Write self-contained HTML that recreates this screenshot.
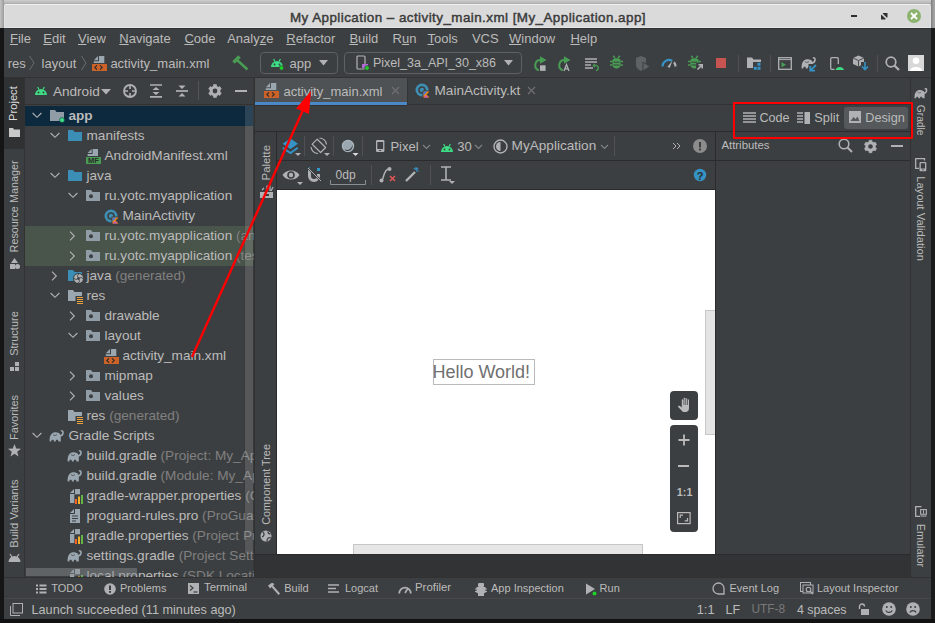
<!DOCTYPE html><html><head><meta charset="utf-8"><style>
html,body{margin:0;padding:0;width:935px;height:623px;overflow:hidden;background:#1c1c1c;position:relative;font-family:"Liberation Sans",sans-serif;}
.t{position:absolute;white-space:nowrap;font-family:"Liberation Sans",sans-serif;}
svg{overflow:visible}
</style></head><body>
<div style="position:absolute;left:0px;top:0px;width:935px;height:28px;background:linear-gradient(#cdcdcd,#c0c0c0 2px,#a9a9a9 4px,#a9a9a9);"></div>
<div style="position:absolute;left:0px;top:0px;width:4px;height:28px;background:linear-gradient(90deg,#c2c2c2,#b0b0b0 2px,#999999 4px);"></div>
<div style="position:absolute;left:931px;top:0px;width:4px;height:28px;background:linear-gradient(90deg,#7a7a7a,#9c9c9c 2px,#a4a4a4 4px);"></div>
<div style="position:absolute;left:0px;top:28px;width:4px;height:595px;background:#151515;"></div>
<div style="position:absolute;left:931px;top:28px;width:4px;height:595px;background:#1b1b1b;"></div>
<div style="position:absolute;left:0px;top:619px;width:935px;height:4px;background:#121212;"></div>
<div style="position:absolute;left:4px;top:28px;width:927px;height:591px;background:#3c3f41;"></div>
<div style="position:absolute;left:4px;top:4px;width:927px;height:24px;background:#dadada;border-top:1px solid #efefef;border-left:1px solid #e2e2e2;border-right:1px solid #e2e2e2;border-bottom:1px solid #e6e6e6;box-sizing:border-box;border-radius:2px 2px 0 0;"></div>
<div style="position:absolute;left:4px;top:28px;width:927px;height:1px;background:#2f3234;"></div>
<div class="t" style="left:290px;top:10.66px;font-size:13.4px;line-height:13.4px;color:#3a3a3a;-webkit-text-stroke:0.45px #3a3a3a;letter-spacing:0.45px;">My Application – activity_main.xml [My_Application.app]</div>
<div style="position:absolute;left:851px;top:15px;width:6px;height:2px;background:#2e2e2e;"></div>
<svg style="position:absolute;left:880.5px;top:12.5px;" width="7" height="7" viewBox="0 0 7 7"><path d="M2.3 0 H6.5 V4.2 L4.2 6.5 H0 V2.3 Z" fill="#2e2e2e"/><path d="M0.6 0.6 L5.9 5.9" stroke="#dadada" stroke-width="1.5"/></svg>
<svg style="position:absolute;left:907px;top:9px;" width="14" height="14" viewBox="0 0 14 14"><circle cx="7" cy="7" r="7" fill="#8cb36e"/><path d="M4 4 L10 10 M10 4 L4 10" stroke="#fff" stroke-width="1.8"/></svg>
<div class="t" style="left:10px;top:32.00px;font-size:13px;line-height:13px;color:#bbbbbb;"><u>F</u>ile</div>
<div class="t" style="left:43.3px;top:32.00px;font-size:13px;line-height:13px;color:#bbbbbb;"><u>E</u>dit</div>
<div class="t" style="left:78px;top:32.00px;font-size:13px;line-height:13px;color:#bbbbbb;"><u>V</u>iew</div>
<div class="t" style="left:119.3px;top:32.00px;font-size:13px;line-height:13px;color:#bbbbbb;"><u>N</u>avigate</div>
<div class="t" style="left:184.4px;top:32.00px;font-size:13px;line-height:13px;color:#bbbbbb;"><u>C</u>ode</div>
<div class="t" style="left:227.2px;top:32.00px;font-size:13px;line-height:13px;color:#bbbbbb;">Analy<u>z</u>e</div>
<div class="t" style="left:286.3px;top:32.00px;font-size:13px;line-height:13px;color:#bbbbbb;"><u>R</u>efactor</div>
<div class="t" style="left:349.4px;top:32.00px;font-size:13px;line-height:13px;color:#bbbbbb;"><u>B</u>uild</div>
<div class="t" style="left:392.5px;top:32.00px;font-size:13px;line-height:13px;color:#bbbbbb;">R<u>u</u>n</div>
<div class="t" style="left:427.5px;top:32.00px;font-size:13px;line-height:13px;color:#bbbbbb;"><u>T</u>ools</div>
<div class="t" style="left:471.9px;top:32.00px;font-size:13px;line-height:13px;color:#bbbbbb;">VCS</div>
<div class="t" style="left:509px;top:32.00px;font-size:13px;line-height:13px;color:#bbbbbb;"><u>W</u>indow</div>
<div class="t" style="left:570.4px;top:32.00px;font-size:13px;line-height:13px;color:#bbbbbb;"><u>H</u>elp</div>
<div style="position:absolute;left:4px;top:77px;width:927px;height:1px;background:#323232;"></div>
<div class="t" style="left:7.7px;top:57.00px;font-size:13px;line-height:13px;color:#bbbbbb;">res</div>
<svg style="position:absolute;left:28px;top:55px;" width="8" height="16" viewBox="0 0 8 16"><path d="M1.5 1 L6 8 L1.5 15" stroke="#6a6d70" stroke-width="1" fill="none"/></svg>
<div class="t" style="left:41.6px;top:57.00px;font-size:13px;line-height:13px;color:#bbbbbb;">layout</div>
<svg style="position:absolute;left:80px;top:55px;" width="8" height="16" viewBox="0 0 8 16"><path d="M1.5 1 L6 8 L1.5 15" stroke="#6a6d70" stroke-width="1" fill="none"/></svg>
<svg style="position:absolute;left:92px;top:56px;" width="15" height="15" viewBox="0 0 15 15"><path d="M1.8 4.2 L6 0 V4.2 Z" fill="#9aa7b0"/><path d="M7 0 H12.3 V7 H1.8 V5.2 H7 Z" fill="#9aa7b0"/><rect x="0" y="8" width="15" height="7" fill="#cc6228"/><path d="M5 9.3 L2.8 11.5 L5 13.7 M8 9.3 L10.2 11.5 L8 13.7" stroke="#2b2b2b" stroke-width="1.1" fill="none"/></svg>
<div class="t" style="left:110.4px;top:57.00px;font-size:13px;line-height:13px;color:#bbbbbb;">activity_main.xml</div>
<svg style="position:absolute;left:232px;top:55px;" width="17" height="16" viewBox="0 0 17 16"><path d="M1.5 7.5 L7.5 1.5" stroke="#499c54" stroke-width="3.6"/><path d="M5 5 L15.5 14.5" stroke="#499c54" stroke-width="2.4"/></svg>
<div style="position:absolute;left:260px;top:52px;width:78px;height:22px;background:transparent;border:1px solid #5e6161;border-radius:4px;box-sizing:border-box;"></div>
<svg style="position:absolute;left:270px;top:56px;" width="14" height="14" viewBox="0 0 14 14"><path d="M1 11 A6 6 0 0 1 13 11 Z" fill="#3ddc84"/><path d="M3.6 3 L5 5.5 M10.4 3 L9 5.5" stroke="#3ddc84" stroke-width="1.2"/><circle cx="4.5" cy="8.5" r="0.9" fill="#3c3f41"/><circle cx="9.5" cy="8.5" r="0.9" fill="#3c3f41"/><circle cx="11.5" cy="12" r="2.3" fill="#1bd126" stroke="#3c3f41" stroke-width="0.8"/></svg>
<div class="t" style="left:289.5px;top:57.00px;font-size:13px;line-height:13px;color:#bbbbbb;">app</div>
<svg style="position:absolute;left:319px;top:60px;" width="10" height="6" viewBox="0 0 10 6"><path d="M0 0 H9 L4.5 5.5 Z" fill="#afb1b3"/></svg>
<div style="position:absolute;left:344px;top:52px;width:178px;height:22px;background:transparent;border:1px solid #5e6161;border-radius:4px;box-sizing:border-box;"></div>
<svg style="position:absolute;left:356px;top:55px;" width="14" height="16" viewBox="0 0 14 16"><rect x="1" y="1" width="8" height="13" rx="1" stroke="#afb1b3" stroke-width="1.2" fill="none"/><rect x="6" y="9" width="6" height="4" fill="#b06ad4"/><circle cx="11" cy="13" r="2.3" fill="#1bd126" stroke="#3c3f41" stroke-width="0.8"/></svg>
<div class="t" style="left:373px;top:57.42px;font-size:12.5px;line-height:12.5px;color:#bbbbbb;">Pixel_3a_API_30_x86</div>
<svg style="position:absolute;left:504px;top:60px;" width="10" height="6" viewBox="0 0 10 6"><path d="M0 0 H9 L4.5 5.5 Z" fill="#afb1b3"/></svg>
<div style="position:absolute;left:4px;top:78px;width:20px;height:499px;background:#3c3f41;"></div>
<div style="position:absolute;left:24px;top:78px;width:1px;height:499px;background:#323232;"></div>
<div style="position:absolute;left:4px;top:78px;width:20px;height:71px;background:#2f3133;"></div>
<div class="t" style="left:-13.75px;top:98.38px;width:54.7px;height:11.15px;font-size:11.15px;line-height:11.15px;color:#dddddd;text-align:center;transform:rotate(-90deg);transform-origin:50% 50%;">Project</div>
<svg style="position:absolute;left:9px;top:128px;" width="11" height="9" viewBox="0 0 11 9"><path d="M0 0 H4 L5 1.5 H11 V9 H0 Z" fill="#c8c8c8"/></svg>
<div class="t" style="left:-41.60px;top:201.09px;width:112.0px;height:10.82px;font-size:10.82px;line-height:10.82px;color:#bbbbbb;text-align:center;transform:rotate(-90deg);transform-origin:50% 50%;">Resource Manager</div>
<svg style="position:absolute;left:9px;top:258px;" width="11" height="11" viewBox="0 0 11 11"><path d="M5.5 0 L9 5 H2 Z" fill="#afb1b3"/><rect x="1" y="6" width="5" height="5" fill="#afb1b3"/><circle cx="8.5" cy="8.5" r="2.5" fill="#afb1b3"/></svg>
<div class="t" style="left:-17.90px;top:328.30px;width:64.60000000000002px;height:10.99px;font-size:10.99px;line-height:10.99px;color:#bbbbbb;text-align:center;transform:rotate(-90deg);transform-origin:50% 50%;">Structure</div>
<svg style="position:absolute;left:10px;top:362px;" width="10" height="10" viewBox="0 0 10 10"><rect x="0" y="5" width="4" height="4" fill="#afb1b3"/><rect x="5" y="0" width="4" height="4" fill="#afb1b3"/><rect x="5" y="5" width="4" height="4" fill="#afb1b3"/></svg>
<div class="t" style="left:-18.10px;top:411.53px;width:65.0px;height:10.94px;font-size:10.94px;line-height:10.94px;color:#bbbbbb;text-align:center;transform:rotate(-90deg);transform-origin:50% 50%;">Favorites</div>
<svg style="position:absolute;left:8px;top:444px;" width="13" height="13" viewBox="0 0 13 13"><path d="M6.5 0 L8.2 4.6 L13 4.8 L9.2 7.8 L10.5 12.5 L6.5 9.8 L2.5 12.5 L3.8 7.8 L0 4.8 L4.8 4.6 Z" fill="#afb1b3"/></svg>
<div class="t" style="left:-29.80px;top:508.09px;width:88.39999999999998px;height:11.22px;font-size:11.22px;line-height:11.22px;color:#bbbbbb;text-align:center;transform:rotate(-90deg);transform-origin:50% 50%;">Build Variants</div>
<svg style="position:absolute;left:8px;top:553px;" width="13" height="10" viewBox="0 0 13 10"><path d="M0.5 9 A6 6 0 0 1 12.5 9 Z" fill="#afb1b3"/><path d="M2 1 L4 4 M11 1 L9 4" stroke="#afb1b3" stroke-width="1.3"/></svg>
<div style="position:absolute;left:25px;top:78px;width:228px;height:499px;background:#3c3f41;"></div>
<div style="position:absolute;left:25px;top:104px;width:228px;height:1px;background:#323232;"></div>
<svg style="position:absolute;left:35px;top:57px;" width="14" height="14" viewBox="0 0 14 14"></svg>
<svg style="position:absolute;left:34px;top:84px;" width="14" height="12" viewBox="0 0 14 12"><path d="M1 11 A6 6 0 0 1 13 11 Z" fill="#3ddc84"/><path d="M3.6 3 L5 5.5 M10.4 3 L9 5.5" stroke="#3ddc84" stroke-width="1.2"/><circle cx="4.5" cy="8.5" r="0.9" fill="#3c3f41"/><circle cx="9.5" cy="8.5" r="0.9" fill="#3c3f41"/></svg>
<div class="t" style="left:52.9px;top:85.49px;font-size:13.6px;line-height:13.6px;color:#bbbbbb;">Android</div>
<svg style="position:absolute;left:101px;top:89px;" width="11" height="6" viewBox="0 0 11 6"><path d="M0 0 H10 L5 5.5 Z" fill="#afb1b3"/></svg>
<svg style="position:absolute;left:123px;top:84px;" width="14" height="14" viewBox="0 0 14 14"><circle cx="7" cy="7" r="6" stroke="#afb1b3" stroke-width="1.8" fill="none"/><path d="M7 1 V5 M7 9 V13 M1 7 H5 M9 7 H13" stroke="#afb1b3" stroke-width="1.6"/></svg>
<svg style="position:absolute;left:150px;top:84px;" width="12" height="14" viewBox="0 0 12 14"><path d="M0 1 H12 M0 12.8 H12" stroke="#afb1b3" stroke-width="1.7"/><path d="M2.5 6 L6 3 L9.5 6 Z M2.5 8 L6 11 L9.5 8 Z" fill="#afb1b3"/></svg>
<svg style="position:absolute;left:176px;top:84px;" width="12" height="14" viewBox="0 0 12 14"><path d="M0 7 H12" stroke="#afb1b3" stroke-width="1.7"/><path d="M2.5 1.5 L6 5 L9.5 1.5 Z M2.5 12.5 L6 9 L9.5 12.5 Z" fill="#afb1b3"/></svg>
<div style="position:absolute;left:198px;top:81px;width:1px;height:19px;background:#555555;"></div>
<svg style="position:absolute;left:208.3px;top:84.3px;" width="14" height="14" viewBox="0 0 14 14"><path d="M4.57 2.52 L5.55 2.11 L5.49 0.57 L8.51 0.57 L8.45 2.11 L9.43 2.52 L9.66 2.65 L10.51 3.30 L11.81 2.48 L13.32 5.09 L11.96 5.81 L12.10 6.87 L12.10 7.13 L11.96 8.19 L13.32 8.91 L11.81 11.52 L10.51 10.70 L9.66 11.35 L9.43 11.48 L8.45 11.89 L8.51 13.43 L5.49 13.43 L5.55 11.89 L4.57 11.48 L4.34 11.35 L3.49 10.70 L2.19 11.52 L0.68 8.91 L2.04 8.19 L1.90 7.13 L1.90 6.87 L2.04 5.81 L0.68 5.09 L2.19 2.48 L3.49 3.30 L4.34 2.65 Z" fill="#afb1b3" stroke="#afb1b3" stroke-width="0.6" stroke-linejoin="round"/><circle cx="7" cy="7" r="2.4" fill="#3c3f41"/></svg>
<div style="position:absolute;left:235px;top:90px;width:12px;height:2px;background:#afb1b3;"></div>
<div style="position:absolute;left:25px;top:106px;width:228px;height:20px;background:#0d293e;"></div>
<div style="position:absolute;left:25px;top:226px;width:228px;height:40px;background:#49544a;"></div>
<svg style="position:absolute;left:31.5px;top:112.4px;" width="10" height="6" viewBox="0 0 10 6"><path d="M0.6 1 L5 5.3 L9.4 1" stroke="#afb1b3" stroke-width="1.15" fill="none"/></svg>
<svg style="position:absolute;left:50px;top:110.2px;" width="14" height="11" viewBox="0 0 14 11"><path d="M0 0 H5 L6.5 2 H14 V11 H0 Z" fill="#909da6"/><circle cx="12" cy="10" r="2.5" fill="#3ddc84" stroke="#0d293e" stroke-width="0.5"/></svg>
<div class="t" style="left:68.5px;top:109.49px;font-size:13.6px;line-height:13.6px;color:#bbbbbb;font-weight:bold;">app</div>
<svg style="position:absolute;left:49.5px;top:132.4px;" width="10" height="6" viewBox="0 0 10 6"><path d="M0.6 1 L5 5.3 L9.4 1" stroke="#afb1b3" stroke-width="1.15" fill="none"/></svg>
<svg style="position:absolute;left:68px;top:130.2px;" width="14" height="11" viewBox="0 0 14 11"><path d="M0 0 H5 L6.5 2 H14 V11 H0 Z" fill="#3b8eb5"/></svg>
<div class="t" style="left:86.5px;top:129.49px;font-size:13.6px;line-height:13.6px;color:#bbbbbb;">manifests</div>
<svg style="position:absolute;left:86px;top:149px;" width="15" height="15" viewBox="0 0 15 15"><path d="M1.6 4 L5.6 0 V4 Z" fill="#9aa7b0"/><path d="M6.6 0 H12 V7 H1.6 V5 H6.6 Z" fill="#9aa7b0"/><rect x="0" y="8" width="15" height="7" fill="#499c54"/><text x="7.5" y="14.3" font-size="7.5" font-weight="bold" font-family="Liberation Sans" text-anchor="middle" fill="#2b2b2b">MF</text></svg>
<div class="t" style="left:104.5px;top:149.49px;font-size:13.6px;line-height:13.6px;color:#bbbbbb;">AndroidManifest.xml</div>
<svg style="position:absolute;left:49.5px;top:172.4px;" width="10" height="6" viewBox="0 0 10 6"><path d="M0.6 1 L5 5.3 L9.4 1" stroke="#afb1b3" stroke-width="1.15" fill="none"/></svg>
<svg style="position:absolute;left:68px;top:170.2px;" width="14" height="11" viewBox="0 0 14 11"><path d="M0 0 H5 L6.5 2 H14 V11 H0 Z" fill="#3b8eb5"/></svg>
<div class="t" style="left:86.5px;top:169.49px;font-size:13.6px;line-height:13.6px;color:#bbbbbb;">java</div>
<svg style="position:absolute;left:67.5px;top:192.4px;" width="10" height="6" viewBox="0 0 10 6"><path d="M0.6 1 L5 5.3 L9.4 1" stroke="#afb1b3" stroke-width="1.15" fill="none"/></svg>
<svg style="position:absolute;left:86px;top:190.2px;" width="14" height="11" viewBox="0 0 14 11"><path d="M0 0 H5 L6.5 2 H14 V11 H0 Z" fill="#909da6"/><circle cx="5" cy="6.2" r="2" fill="#3c3f41"/></svg>
<div class="t" style="left:104.5px;top:189.49px;font-size:13.6px;line-height:13.6px;color:#bbbbbb;">ru.yotc.myapplication</div>
<svg style="position:absolute;left:104px;top:209px;" width="15" height="15" viewBox="0 0 15 15"><circle cx="7" cy="7" r="6.5" fill="#3d8fb3"/><circle cx="7" cy="7" r="3" fill="none" stroke="#3c3f41" stroke-width="1.6"/><path d="M7.5 7.5 H15 V15 H7.5 Z" fill="#3c3f41"/><path d="M8.5 8.5 H14.5 L11.5 11.5 L14.5 14.5 H8.5 Z" fill="#f88909"/><path d="M8.5 8.5 H12.5 L8.5 12.5 Z" fill="#3d7be0"/><path d="M8.5 14.5 L11 12 L13.5 14.5 Z" fill="#c757bc"/></svg>
<div class="t" style="left:122.5px;top:209.49px;font-size:13.6px;line-height:13.6px;color:#bbbbbb;">MainActivity</div>
<svg style="position:absolute;left:69.3px;top:230.6px;" width="6" height="10" viewBox="0 0 6 10"><path d="M1 0.6 L5.3 5 L1 9.4" stroke="#afb1b3" stroke-width="1.15" fill="none"/></svg>
<svg style="position:absolute;left:86px;top:230.2px;" width="14" height="11" viewBox="0 0 14 11"><path d="M0 0 H5 L6.5 2 H14 V11 H0 Z" fill="#909da6"/><circle cx="5" cy="6.2" r="2" fill="#3c3f41"/></svg>
<div class="t" style="left:104.5px;top:229.49px;font-size:13.6px;line-height:13.6px;color:#bbbbbb;">ru.yotc.myapplication <span style="color:#808080">(androidTest)</span></div>
<svg style="position:absolute;left:69.3px;top:250.6px;" width="6" height="10" viewBox="0 0 6 10"><path d="M1 0.6 L5.3 5 L1 9.4" stroke="#afb1b3" stroke-width="1.15" fill="none"/></svg>
<svg style="position:absolute;left:86px;top:250.2px;" width="14" height="11" viewBox="0 0 14 11"><path d="M0 0 H5 L6.5 2 H14 V11 H0 Z" fill="#909da6"/><circle cx="5" cy="6.2" r="2" fill="#3c3f41"/></svg>
<div class="t" style="left:104.5px;top:249.49px;font-size:13.6px;line-height:13.6px;color:#bbbbbb;">ru.yotc.myapplication <span style="color:#808080">(test)</span></div>
<svg style="position:absolute;left:51.3px;top:270.6px;" width="6" height="10" viewBox="0 0 6 10"><path d="M1 0.6 L5.3 5 L1 9.4" stroke="#afb1b3" stroke-width="1.15" fill="none"/></svg>
<svg style="position:absolute;left:68px;top:270px;" width="16" height="15" viewBox="0 0 16 15"><path d="M0 0 H5 L6.5 2 H14 V11 H0 Z" fill="#3b8eb5"/><circle cx="10.5" cy="8.5" r="5.5" fill="#3c3f41"/><circle cx="10.5" cy="8.5" r="4.6" fill="#afb1b3"/><path d="M10.5 8.5 C9 6 9.5 4.5 11 4 M10.5 8.5 C13 7 14.5 7.5 15 9 M10.5 8.5 C12 11 11.5 12.5 10 13 M10.5 8.5 C8 10 6.5 9.5 6 8" stroke="#3c3f41" stroke-width="0.9" fill="none"/><circle cx="10.5" cy="8.5" r="1.2" fill="#3c3f41"/></svg>
<div class="t" style="left:86.5px;top:269.49px;font-size:13.6px;line-height:13.6px;color:#bbbbbb;">java <span style="color:#808080">(generated)</span></div>
<svg style="position:absolute;left:49.5px;top:292.4px;" width="10" height="6" viewBox="0 0 10 6"><path d="M0.6 1 L5 5.3 L9.4 1" stroke="#afb1b3" stroke-width="1.15" fill="none"/></svg>
<svg style="position:absolute;left:68px;top:290px;" width="16" height="15" viewBox="0 0 16 15"><path d="M0 0 H5 L6.5 2 H14 V11 H0 Z" fill="#9aa7b0"/><rect x="7.5" y="6" width="8.5" height="9" fill="#3c3f41"/><path d="M9 7.5 H15 M9 9.5 H15 M9 11.5 H15 M9 13.5 H15" stroke="#e8a33e" stroke-width="1.1"/></svg>
<div class="t" style="left:86.5px;top:289.49px;font-size:13.6px;line-height:13.6px;color:#bbbbbb;">res</div>
<svg style="position:absolute;left:69.3px;top:310.6px;" width="6" height="10" viewBox="0 0 6 10"><path d="M1 0.6 L5.3 5 L1 9.4" stroke="#afb1b3" stroke-width="1.15" fill="none"/></svg>
<svg style="position:absolute;left:86px;top:310.2px;" width="14" height="11" viewBox="0 0 14 11"><path d="M0 0 H5 L6.5 2 H14 V11 H0 Z" fill="#909da6"/><circle cx="5" cy="6.2" r="2" fill="#3c3f41"/></svg>
<div class="t" style="left:104.5px;top:309.49px;font-size:13.6px;line-height:13.6px;color:#bbbbbb;">drawable</div>
<svg style="position:absolute;left:67.5px;top:332.4px;" width="10" height="6" viewBox="0 0 10 6"><path d="M0.6 1 L5 5.3 L9.4 1" stroke="#afb1b3" stroke-width="1.15" fill="none"/></svg>
<svg style="position:absolute;left:86px;top:330.2px;" width="14" height="11" viewBox="0 0 14 11"><path d="M0 0 H5 L6.5 2 H14 V11 H0 Z" fill="#909da6"/><circle cx="5" cy="6.2" r="2" fill="#3c3f41"/></svg>
<div class="t" style="left:104.5px;top:329.49px;font-size:13.6px;line-height:13.6px;color:#bbbbbb;">layout</div>
<svg style="position:absolute;left:104px;top:349px;" width="15" height="15" viewBox="0 0 15 15"><path d="M1.8 4.2 L6 0 V4.2 Z" fill="#9aa7b0"/><path d="M7 0 H12.3 V7 H1.8 V5.2 H7 Z" fill="#9aa7b0"/><rect x="0" y="8" width="15" height="7" fill="#cc6228"/><path d="M5 9.3 L2.8 11.5 L5 13.7 M8 9.3 L10.2 11.5 L8 13.7" stroke="#2b2b2b" stroke-width="1.1" fill="none"/></svg>
<div class="t" style="left:122.5px;top:349.49px;font-size:13.6px;line-height:13.6px;color:#bbbbbb;">activity_main.xml</div>
<svg style="position:absolute;left:69.3px;top:370.6px;" width="6" height="10" viewBox="0 0 6 10"><path d="M1 0.6 L5.3 5 L1 9.4" stroke="#afb1b3" stroke-width="1.15" fill="none"/></svg>
<svg style="position:absolute;left:86px;top:370.2px;" width="14" height="11" viewBox="0 0 14 11"><path d="M0 0 H5 L6.5 2 H14 V11 H0 Z" fill="#909da6"/><circle cx="5" cy="6.2" r="2" fill="#3c3f41"/></svg>
<div class="t" style="left:104.5px;top:369.49px;font-size:13.6px;line-height:13.6px;color:#bbbbbb;">mipmap</div>
<svg style="position:absolute;left:69.3px;top:390.6px;" width="6" height="10" viewBox="0 0 6 10"><path d="M1 0.6 L5.3 5 L1 9.4" stroke="#afb1b3" stroke-width="1.15" fill="none"/></svg>
<svg style="position:absolute;left:86px;top:390.2px;" width="14" height="11" viewBox="0 0 14 11"><path d="M0 0 H5 L6.5 2 H14 V11 H0 Z" fill="#909da6"/><circle cx="5" cy="6.2" r="2" fill="#3c3f41"/></svg>
<div class="t" style="left:104.5px;top:389.49px;font-size:13.6px;line-height:13.6px;color:#bbbbbb;">values</div>
<svg style="position:absolute;left:68px;top:410px;" width="16" height="15" viewBox="0 0 16 15"><path d="M0 0 H5 L6.5 2 H14 V11 H0 Z" fill="#9aa7b0"/><rect x="7.5" y="6" width="8.5" height="9" fill="#3c3f41"/><path d="M9 7.5 H15 M9 9.5 H15 M9 11.5 H15 M9 13.5 H15" stroke="#e8a33e" stroke-width="1.1"/></svg>
<div class="t" style="left:86.5px;top:409.49px;font-size:13.6px;line-height:13.6px;color:#bbbbbb;">res <span style="color:#808080">(generated)</span></div>
<svg style="position:absolute;left:31.5px;top:432.4px;" width="10" height="6" viewBox="0 0 10 6"><path d="M0.6 1 L5 5.3 L9.4 1" stroke="#afb1b3" stroke-width="1.15" fill="none"/></svg>
<svg style="position:absolute;left:49px;top:429.5px;" width="17" height="13" viewBox="0 0 17 13"><path d="M0.7 11.5 C0.2 7 2 2.5 6 2.3 C9 2.2 11 3 11.8 5.5 L11.8 11.5 H9.5 L9 10 C8.5 9.5 7.5 9.5 7 10 L6.7 11.5 H5 L4.6 10 C4 9.5 3 9.5 2.6 10 L2.3 11.5 Z" fill="#9aa7b0"/><path d="M11 6 C13 5.5 14.2 3.8 14 2 C13.9 0.8 12.8 0.5 12 1.3" stroke="#9aa7b0" stroke-width="1.6" fill="none"/><path d="M4 4.5 C5 5.8 6.8 5.8 8 4.5" stroke="#3c3f41" stroke-width="0.7" fill="none"/></svg>
<div class="t" style="left:68.5px;top:429.49px;font-size:13.6px;line-height:13.6px;color:#bbbbbb;">Gradle Scripts</div>
<svg style="position:absolute;left:67px;top:449.5px;" width="17" height="13" viewBox="0 0 17 13"><path d="M0.7 11.5 C0.2 7 2 2.5 6 2.3 C9 2.2 11 3 11.8 5.5 L11.8 11.5 H9.5 L9 10 C8.5 9.5 7.5 9.5 7 10 L6.7 11.5 H5 L4.6 10 C4 9.5 3 9.5 2.6 10 L2.3 11.5 Z" fill="#9aa7b0"/><path d="M11 6 C13 5.5 14.2 3.8 14 2 C13.9 0.8 12.8 0.5 12 1.3" stroke="#9aa7b0" stroke-width="1.6" fill="none"/><path d="M4 4.5 C5 5.8 6.8 5.8 8 4.5" stroke="#3c3f41" stroke-width="0.7" fill="none"/></svg>
<div class="t" style="left:86.5px;top:449.49px;font-size:13.6px;line-height:13.6px;color:#bbbbbb;">build.gradle <span style="color:#808080">(Project: My_Application)</span></div>
<svg style="position:absolute;left:67px;top:469.5px;" width="17" height="13" viewBox="0 0 17 13"><path d="M0.7 11.5 C0.2 7 2 2.5 6 2.3 C9 2.2 11 3 11.8 5.5 L11.8 11.5 H9.5 L9 10 C8.5 9.5 7.5 9.5 7 10 L6.7 11.5 H5 L4.6 10 C4 9.5 3 9.5 2.6 10 L2.3 11.5 Z" fill="#9aa7b0"/><path d="M11 6 C13 5.5 14.2 3.8 14 2 C13.9 0.8 12.8 0.5 12 1.3" stroke="#9aa7b0" stroke-width="1.6" fill="none"/><path d="M4 4.5 C5 5.8 6.8 5.8 8 4.5" stroke="#3c3f41" stroke-width="0.7" fill="none"/></svg>
<div class="t" style="left:86.5px;top:469.49px;font-size:13.6px;line-height:13.6px;color:#bbbbbb;">build.gradle <span style="color:#808080">(Module: My_Application.app)</span></div>
<svg style="position:absolute;left:70px;top:489px;" width="15" height="16" viewBox="0 0 15 16"><path d="M0 4 L4 0 V4 Z" fill="#9aa7b0"/><path d="M5 0 H10 V14 H0 V5 H5 Z" fill="#9aa7b0"/><rect x="4.3" y="5.3" width="10" height="10" fill="#3c3f41"/><rect x="5" y="10" width="2" height="5" fill="#f26522"/><rect x="8" y="7.5" width="2" height="7.5" fill="#f4b02a"/><rect x="11" y="6" width="2" height="9" fill="#62b543"/></svg>
<div class="t" style="left:86.5px;top:489.49px;font-size:13.6px;line-height:13.6px;color:#bbbbbb;">gradle-wrapper.properties <span style="color:#808080">(Gradle Version)</span></div>
<svg style="position:absolute;left:70px;top:509px;" width="15" height="15" viewBox="0 0 15 15"><path d="M0 4 L4 0 V4 Z" fill="#9aa7b0"/><path d="M5 0 H10 V14 H0 V5 H5 Z" fill="#9aa7b0"/><path d="M2 7 H8 M2 9.5 H8 M2 12 H6" stroke="#3c3f41" stroke-width="1.1"/></svg>
<div class="t" style="left:86.5px;top:509.49px;font-size:13.6px;line-height:13.6px;color:#bbbbbb;">proguard-rules.pro <span style="color:#808080">(ProGuard Rules for My_Application.app)</span></div>
<svg style="position:absolute;left:70px;top:529px;" width="15" height="16" viewBox="0 0 15 16"><path d="M0 4 L4 0 V4 Z" fill="#9aa7b0"/><path d="M5 0 H10 V14 H0 V5 H5 Z" fill="#9aa7b0"/><rect x="4.3" y="5.3" width="10" height="10" fill="#3c3f41"/><rect x="5" y="10" width="2" height="5" fill="#f26522"/><rect x="8" y="7.5" width="2" height="7.5" fill="#f4b02a"/><rect x="11" y="6" width="2" height="9" fill="#62b543"/></svg>
<div class="t" style="left:86.5px;top:529.49px;font-size:13.6px;line-height:13.6px;color:#bbbbbb;">gradle.properties <span style="color:#808080">(Project Properties)</span></div>
<svg style="position:absolute;left:67px;top:549.5px;" width="17" height="13" viewBox="0 0 17 13"><path d="M0.7 11.5 C0.2 7 2 2.5 6 2.3 C9 2.2 11 3 11.8 5.5 L11.8 11.5 H9.5 L9 10 C8.5 9.5 7.5 9.5 7 10 L6.7 11.5 H5 L4.6 10 C4 9.5 3 9.5 2.6 10 L2.3 11.5 Z" fill="#9aa7b0"/><path d="M11 6 C13 5.5 14.2 3.8 14 2 C13.9 0.8 12.8 0.5 12 1.3" stroke="#9aa7b0" stroke-width="1.6" fill="none"/><path d="M4 4.5 C5 5.8 6.8 5.8 8 4.5" stroke="#3c3f41" stroke-width="0.7" fill="none"/></svg>
<div class="t" style="left:86.5px;top:549.49px;font-size:13.6px;line-height:13.6px;color:#bbbbbb;">settings.gradle <span style="color:#808080">(Project Settings)</span></div>
<svg style="position:absolute;left:70px;top:569px;" width="15" height="16" viewBox="0 0 15 16"><path d="M0 4 L4 0 V4 Z" fill="#9aa7b0"/><path d="M5 0 H10 V14 H0 V5 H5 Z" fill="#9aa7b0"/><rect x="4.3" y="5.3" width="10" height="10" fill="#3c3f41"/><rect x="5" y="10" width="2" height="5" fill="#f26522"/><rect x="8" y="7.5" width="2" height="7.5" fill="#f4b02a"/><rect x="11" y="6" width="2" height="9" fill="#62b543"/></svg>
<div class="t" style="left:86.5px;top:569.49px;font-size:13.6px;line-height:13.6px;color:#bbbbbb;">local.properties <span style="color:#808080">(SDK Location)</span></div>
<div style="position:absolute;left:245px;top:106px;width:8px;height:447px;background:rgba(255,255,255,0.13);"></div>
<div style="position:absolute;left:244px;top:106px;width:1px;height:447px;background:rgba(0,0,0,0.05);"></div>
<div style="position:absolute;left:26px;top:568px;width:111px;height:8px;background:rgba(140,144,148,0.45);"></div>
<div style="position:absolute;left:253px;top:78px;width:1px;height:499px;background:rgba(0,0,0,0.08);"></div>
<div style="position:absolute;left:254px;top:78px;width:1px;height:499px;background:#313131;"></div>
<div style="position:absolute;left:255px;top:78px;width:656px;height:499px;background:#3c3f41;"></div>
<div style="position:absolute;left:255px;top:78px;width:152px;height:24px;background:#4e5254;"></div>
<div style="position:absolute;left:255px;top:102px;width:152px;height:3px;background:#4a88c7;"></div>
<div style="position:absolute;left:407px;top:104px;width:504px;height:1px;background:#323232;"></div>
<div style="position:absolute;left:255px;top:105px;width:152px;height:1px;background:#323232;"></div>
<div style="position:absolute;left:407px;top:78px;width:1px;height:26px;background:#333536;"></div>
<svg style="position:absolute;left:264px;top:83px;" width="15" height="15" viewBox="0 0 15 15"><path d="M1.8 4.2 L6 0 V4.2 Z" fill="#9aa7b0"/><path d="M7 0 H12.3 V7 H1.8 V5.2 H7 Z" fill="#9aa7b0"/><rect x="0" y="8" width="15" height="7" fill="#cc6228"/><path d="M5 9.3 L2.8 11.5 L5 13.7 M8 9.3 L10.2 11.5 L8 13.7" stroke="#2b2b2b" stroke-width="1.1" fill="none"/></svg>
<div class="t" style="left:283.5px;top:85.00px;font-size:13px;line-height:13px;color:#bbbbbb;">activity_main.xml</div>
<svg style="position:absolute;left:391px;top:86px;" width="9" height="9" viewBox="0 0 9 9"><path d="M1 1 L8 8 M8 1 L1 8" stroke="#6e7072" stroke-width="1.2"/></svg>
<svg style="position:absolute;left:415px;top:83px;" width="15" height="15" viewBox="0 0 15 15"><circle cx="7" cy="7" r="6.5" fill="#3d8fb3"/><circle cx="7" cy="7" r="3" fill="none" stroke="#3c3f41" stroke-width="1.6"/><path d="M7.5 7.5 H15 V15 H7.5 Z" fill="#3c3f41"/><path d="M8.5 8.5 H14.5 L11.5 11.5 L14.5 14.5 H8.5 Z" fill="#f88909"/><path d="M8.5 8.5 H12.5 L8.5 12.5 Z" fill="#3d7be0"/><path d="M8.5 14.5 L11 12 L13.5 14.5 Z" fill="#c757bc"/></svg>
<div class="t" style="left:434.5px;top:84.49px;font-size:13.6px;line-height:13.6px;color:#bbbbbb;">MainActivity.kt</div>
<svg style="position:absolute;left:527px;top:86px;" width="9" height="9" viewBox="0 0 9 9"><path d="M1 1 L8 8 M8 1 L1 8" stroke="#6e7072" stroke-width="1.2"/></svg>
<div style="position:absolute;left:255px;top:131px;width:656px;height:1px;background:#2b2b2b;"></div>
<svg style="position:absolute;left:743px;top:112px;" width="13" height="12" viewBox="0 0 13 12"><path d="M0 1 H13 M0 4 H13 M0 7 H13 M0 10 H13" stroke="#afb1b3" stroke-width="1.6"/></svg>
<div class="t" style="left:759.5px;top:112.33px;font-size:12.6px;line-height:12.6px;color:#bbbbbb;">Code</div>
<svg style="position:absolute;left:797px;top:112px;" width="13" height="12" viewBox="0 0 13 12"><path d="M0 1 H6 M0 4 H6 M0 7 H6 M0 10 H6" stroke="#afb1b3" stroke-width="1.6"/><rect x="7.5" y="0" width="5.5" height="12" fill="#afb1b3"/></svg>
<div class="t" style="left:814.3px;top:112.16px;font-size:12.8px;line-height:12.8px;color:#bbbbbb;">Split</div>
<div style="position:absolute;left:844px;top:107px;width:64px;height:22px;background:#55595c;border-radius:3px;"></div>
<svg style="position:absolute;left:849px;top:111px;" width="12" height="12" viewBox="0 0 12 12"><rect x="0" y="0" width="12" height="12" fill="#afb1b3"/><path d="M1.5 10 L4.5 6 L6.5 8 L8.5 5.5 L10.5 10 Z" fill="#55595c"/></svg>
<div class="t" style="left:865.3px;top:112.25px;font-size:12.7px;line-height:12.7px;color:#bbbbbb;">Design</div>
<div style="position:absolute;left:276px;top:132px;width:1px;height:422px;background:#2b2b2b;"></div>
<div class="t" style="left:238.90px;top:156.61px;width:55.400000000000006px;height:11.37px;font-size:11.37px;line-height:11.37px;color:#bbbbbb;text-align:center;transform:rotate(-90deg);transform-origin:50% 50%;">Palette</div>
<svg style="position:absolute;left:260px;top:185px;" width="13" height="13" viewBox="0 0 13 13"><rect x="0" y="7" width="13" height="6" fill="#afb1b3"/><rect x="4" y="9" width="5" height="2" fill="#3c3f41"/><path d="M2 5 L4 3 M7 6 L7 1 L10 1 L10 6 M11 6 L13 2" stroke="#afb1b3" stroke-width="1.2" fill="none"/></svg>
<div class="t" style="left:216.15px;top:478.63px;width:100.89999999999998px;height:10.83px;font-size:10.83px;line-height:10.83px;color:#bbbbbb;text-align:center;transform:rotate(-90deg);transform-origin:50% 50%;">Component Tree</div>
<svg style="position:absolute;left:260px;top:530px;" width="12" height="12" viewBox="0 0 12 12"><circle cx="6" cy="6" r="5.5" fill="#afb1b3"/><path d="M3 2 C5 4 4 6 2 7 M7 11 C7 8 9 7 11 8 M8 1.5 C8 3 9 4 10.5 4" stroke="#3c3f41" stroke-width="1.3" fill="none"/></svg>
<div style="position:absolute;left:277px;top:160px;width:438px;height:1px;background:#2b2b2b;"></div>
<div style="position:absolute;left:277px;top:189px;width:438px;height:1px;background:#2b2b2b;"></div>
<svg style="position:absolute;left:281px;top:137px;" width="22" height="20" viewBox="0 0 22 20"><path d="M9.5 1.5 L17 6.8 L9.5 12 L1.5 6.8 Z" fill="#3592c4"/><path d="M1.8 10.8 L9.5 16 L16.8 10.8" stroke="#3592c4" stroke-width="2" fill="none"/><path d="M14 16 H20 L17 19 Z" fill="#afb1b3"/></svg>
<div style="position:absolute;left:304px;top:136px;width:1px;height:20px;background:#515151;"></div>
<svg style="position:absolute;left:306px;top:134px;" width="30" height="24" viewBox="0 0 30 24"><path d="M11.2 5.2 L19.6 13.5 L14.6 18.5 L6.2 10.2 Z" stroke="#afb1b3" stroke-width="1.2" fill="none" stroke-linejoin="round"/><path d="M13.5 4 A7.7 7.7 0 0 1 20.5 10.5 M5 13 A7.7 7.7 0 0 0 12 19.5" stroke="#afb1b3" stroke-width="1.2" fill="none"/><path d="M18 19 H24 L21 22 Z" fill="#afb1b3"/></svg>
<div style="position:absolute;left:333px;top:136px;width:1px;height:20px;background:#515151;"></div>
<svg style="position:absolute;left:341px;top:139px;" width="20" height="19" viewBox="0 0 20 19"><circle cx="7" cy="7" r="6.2" fill="#9aa7b0"/><circle cx="7" cy="7" r="5.6" fill="none" stroke="#b9c1c7" stroke-width="0.6"/><path d="M3.5 10.5 C7 12 11 10 11.5 5.5 C12.5 9.5 9 13 4.8 11.8 Z" fill="#3c3f41"/><path d="M11.5 14 H17.5 L14.5 17 Z" fill="#dddddd"/></svg>
<div style="position:absolute;left:362px;top:136px;width:1px;height:20px;background:#515151;"></div>
<svg style="position:absolute;left:375.8px;top:140px;" width="9" height="12" viewBox="0 0 9 12"><rect x="0" y="0" width="8.4" height="12" rx="1.2" fill="#afb1b3"/><rect x="1.3" y="2" width="5.8" height="7" fill="#3c3f41"/><rect x="3.2" y="10" width="2" height="1" fill="#3c3f41"/></svg>
<div class="t" style="left:390.4px;top:140.00px;font-size:13px;line-height:13px;color:#bbbbbb;">Pixel</div>
<svg style="position:absolute;left:422px;top:144px;" width="9" height="6" viewBox="0 0 9 6"><path d="M1 1 L4.5 4.5 L8 1" stroke="#7f8285" stroke-width="1.2" fill="none"/></svg>
<svg style="position:absolute;left:440px;top:141px;" width="14" height="11" viewBox="0 0 14 11"><path d="M1 11 A6 6 0 0 1 13 11 Z" fill="#3ddc84"/><path d="M3.6 3 L5 5.5 M10.4 3 L9 5.5" stroke="#3ddc84" stroke-width="1.2"/><circle cx="4.5" cy="8.5" r="0.9" fill="#3c3f41"/><circle cx="9.5" cy="8.5" r="0.9" fill="#3c3f41"/></svg>
<div class="t" style="left:457.2px;top:140.00px;font-size:13px;line-height:13px;color:#bbbbbb;">30</div>
<svg style="position:absolute;left:474px;top:144px;" width="9" height="6" viewBox="0 0 9 6"><path d="M1 1 L4.5 4.5 L8 1" stroke="#7f8285" stroke-width="1.2" fill="none"/></svg>
<svg style="position:absolute;left:493px;top:139px;" width="15" height="15" viewBox="0 0 15 15"><circle cx="7.5" cy="7.5" r="6.5" stroke="#afb1b3" stroke-width="1.4" fill="none"/><path d="M7.5 3 A4.5 4.5 0 0 0 7.5 12 Z" fill="#afb1b3"/></svg>
<div class="t" style="left:511.6px;top:139.49px;font-size:13.6px;line-height:13.6px;color:#bbbbbb;">MyApplication</div>
<svg style="position:absolute;left:600px;top:144px;" width="9" height="6" viewBox="0 0 9 6"><path d="M1 1 L4.5 4.5 L8 1" stroke="#7f8285" stroke-width="1.2" fill="none"/></svg>
<div style="position:absolute;left:614px;top:136px;width:1px;height:20px;background:#515151;"></div>
<svg style="position:absolute;left:672px;top:142px;" width="9" height="8" viewBox="0 0 9 8"><path d="M1 1 L4 4 L1 7 M5 1 L8 4 L5 7" stroke="#afb1b3" stroke-width="1" fill="none"/></svg>
<svg style="position:absolute;left:693px;top:139px;" width="14" height="14" viewBox="0 0 14 14"><circle cx="7" cy="7" r="7" fill="#8c8c8c"/><rect x="6" y="3" width="2" height="5.5" fill="#3c3f41"/><rect x="6" y="9.5" width="2" height="2" fill="#3c3f41"/></svg>
<svg style="position:absolute;left:282px;top:167px;" width="22" height="19" viewBox="0 0 22 19"><path d="M0.5 8 C4 2 14 2 17.5 8 C14 14 4 14 0.5 8 Z" fill="#afb1b3"/><circle cx="9" cy="8" r="3.8" fill="#3c3f41"/><circle cx="9" cy="8" r="2.2" fill="#afb1b3"/><path d="M15 15 H21 L18 18 Z" fill="#afb1b3"/></svg>
<svg style="position:absolute;left:306px;top:166px;" width="17" height="18" viewBox="0 0 17 18"><path d="M2 4 V10 A6 6 0 0 0 14 10 V8 H11 V10 A3 3 0 0 1 5 10 V4 Z" fill="#afb1b3"/><rect x="11" y="2" width="3" height="3" fill="#3592c4"/><rect x="1" y="1" width="3" height="2" fill="#3592c4"/><path d="M1 1 L16 16" stroke="#3c3f41" stroke-width="2"/><path d="M2 2 L15 15" stroke="#afb1b3" stroke-width="1"/></svg>
<div class="t" style="left:335.6px;top:168.84px;font-size:12px;line-height:12px;color:#bbbbbb;">0dp</div>
<svg style="position:absolute;left:330px;top:180px;" width="36" height="6" viewBox="0 0 36 6"><path d="M0.5 0 V4.5 H35.5 V0" stroke="#8c8e90" stroke-width="1" fill="none"/></svg>
<div style="position:absolute;left:371px;top:165px;width:1px;height:20px;background:#515151;"></div>
<svg style="position:absolute;left:379px;top:166px;" width="18" height="18" viewBox="0 0 18 18"><path d="M2 15 C5 15 4 3 10 3" stroke="#afb1b3" stroke-width="1.5" fill="none"/><circle cx="2.5" cy="14.5" r="2" fill="#afb1b3"/><circle cx="10.5" cy="3" r="2" fill="#afb1b3"/><path d="M11 10 L16 15 M16 10 L11 15" stroke="#e05555" stroke-width="1.6"/></svg>
<svg style="position:absolute;left:405px;top:166px;" width="16" height="16" viewBox="0 0 16 16"><path d="M1 15 L10 6" stroke="#afb1b3" stroke-width="2.4"/><path d="M11 1 V4 M14 5 H11 M13 2 L11 4 M9 2 L10 3.5" stroke="#3592c4" stroke-width="1.2"/></svg>
<div style="position:absolute;left:430px;top:165px;width:1px;height:20px;background:#515151;"></div>
<svg style="position:absolute;left:439px;top:166px;" width="17" height="19" viewBox="0 0 17 19"><path d="M2 1 H12 M2 14 H12 M7 1 V14" stroke="#afb1b3" stroke-width="1.6"/><path d="M10 15 H16 L13 18 Z" fill="#afb1b3"/></svg>
<svg style="position:absolute;left:693px;top:168px;" width="14" height="14" viewBox="0 0 14 14"><circle cx="7" cy="7" r="6.2" fill="#3592c4"/><text x="7" y="11.5" font-size="11" font-weight="bold" font-family="Liberation Sans" text-anchor="middle" fill="#2b2b2b">?</text></svg>
<div style="position:absolute;left:277px;top:190px;width:438px;height:364px;background:#ffffff;"></div>
<div style="position:absolute;left:433px;top:359px;width:102px;height:26px;background:transparent;border:1px solid #bababa;box-sizing:border-box;"></div>
<div class="t" style="left:432.4px;top:362.96px;font-size:18px;line-height:18px;color:#707070;">Hello World!</div>
<div style="position:absolute;left:705px;top:310px;width:10px;height:125px;background:#e4e4e4;border:1px solid #c6c6c6;border-right:none;box-sizing:border-box;"></div>
<div style="position:absolute;left:353px;top:544px;width:290px;height:10px;background:#e6e6e6;border:1px solid #c6c6c6;border-bottom:none;box-sizing:border-box;"></div>
<div style="position:absolute;left:670px;top:391px;width:28px;height:29px;background:#3c3f41;border-radius:4px;"></div>
<svg style="position:absolute;left:676px;top:397px;" width="16" height="17" viewBox="0 0 16 17"><path d="M5 15 L1 10 C0.5 9 1.5 8.5 2.5 9 L4 10.5 V3 C4 2 5.5 2 5.5 3 V8 V1.5 C5.5 0.5 7 0.5 7 1.5 V8 V2 C7 1 8.5 1 8.5 2 V8 V3 C8.5 2 10 2 10 3 V11 C10 13.5 9 15 7 15 Z" fill="#bbbbbb" transform="translate(1,0) scale(1.2,1)"/><path d="M7.9 2 V8 M9.7 1.5 V8 M11.5 2.5 V8" stroke="#3c3f41" stroke-width="0.7"/></svg>
<div style="position:absolute;left:670px;top:425px;width:28px;height:107px;background:#3c3f41;border-radius:4px;"></div>
<svg style="position:absolute;left:678px;top:434px;" width="12" height="12" viewBox="0 0 12 12"><path d="M6 0.5 V11.5 M0.5 6 H11.5" stroke="#bbbbbb" stroke-width="1.8"/></svg>
<div style="position:absolute;left:678px;top:465px;width:11px;height:2px;background:#bbbbbb;"></div>
<div class="t" style="left:676.8px;top:486.66px;font-size:10.8px;line-height:10.8px;color:#bbbbbb;font-weight:bold;">1:1</div>
<svg style="position:absolute;left:677px;top:512px;" width="14" height="12" viewBox="0 0 14 12"><rect x="0.6" y="0.6" width="12.5" height="11" stroke="#bbbbbb" stroke-width="1.2" fill="none"/><path d="M3.2 6 V3.2 H6 M10.5 6 V8.8 H7.7" stroke="#bbbbbb" stroke-width="1.2" fill="none"/></svg>
<div style="position:absolute;left:715px;top:132px;width:1px;height:422px;background:#2b2b2b;"></div>
<div style="position:absolute;left:716px;top:160px;width:195px;height:1px;background:#2b2b2b;"></div>
<div class="t" style="left:721.4px;top:140.35px;font-size:11.4px;line-height:11.4px;color:#bbbbbb;">Attributes</div>
<svg style="position:absolute;left:838px;top:138px;" width="15" height="15" viewBox="0 0 15 15"><circle cx="6" cy="6" r="4.8" stroke="#afb1b3" stroke-width="1.6" fill="none"/><path d="M9.5 9.5 L14 14" stroke="#afb1b3" stroke-width="2"/></svg>
<svg style="position:absolute;left:864.3px;top:139.5px;" width="13" height="13" viewBox="0 0 13 13"><path d="M4.11 2.11 L5.08 1.71 L5.04 0.27 L7.96 0.27 L7.92 1.71 L8.89 2.11 L9.11 2.24 L9.94 2.87 L11.17 2.12 L12.63 4.65 L11.36 5.33 L11.50 6.37 L11.50 6.63 L11.36 7.67 L12.63 8.35 L11.17 10.88 L9.94 10.13 L9.11 10.76 L8.89 10.89 L7.92 11.29 L7.96 12.73 L5.04 12.73 L5.08 11.29 L4.11 10.89 L3.89 10.76 L3.06 10.13 L1.83 10.88 L0.37 8.35 L1.64 7.67 L1.50 6.63 L1.50 6.37 L1.64 5.33 L0.37 4.65 L1.83 2.12 L3.06 2.87 L3.89 2.24 Z" fill="#afb1b3" stroke="#afb1b3" stroke-width="0.6" stroke-linejoin="round"/><circle cx="6.5" cy="6.5" r="2.3" fill="#3c3f41"/></svg>
<div style="position:absolute;left:891px;top:145px;width:12px;height:2px;background:#afb1b3;"></div>
<div style="position:absolute;left:255px;top:554px;width:656px;height:23px;background:#313335;"></div>
<div style="position:absolute;left:255px;top:554px;width:656px;height:1px;background:#2b2b2b;"></div>
<div style="position:absolute;left:910px;top:78px;width:1px;height:499px;background:#323232;"></div>
<div style="position:absolute;left:911px;top:78px;width:20px;height:499px;background:#3c3f41;"></div>
<svg style="position:absolute;left:913.5px;top:87.5px;transform:scale(0.9);transform-origin:0 0;" width="15" height="12" viewBox="0 0 15 12"><path d="M0.7 11.5 C0.2 7 2 2.5 6 2.3 C9 2.2 11 3 11.8 5.5 L11.8 11.5 H9.5 L9 10 C8.5 9.5 7.5 9.5 7 10 L6.7 11.5 H5 L4.6 10 C4 9.5 3 9.5 2.6 10 L2.3 11.5 Z" fill="#afb1b3"/><path d="M11 6 C13 5.5 14.2 3.8 14 2 C13.9 0.8 12.8 0.5 12 1.3" stroke="#afb1b3" stroke-width="1.6" fill="none"/><path d="M4 4.5 C5 5.8 6.8 5.8 8 4.5" stroke="#3c3f41" stroke-width="0.7" fill="none"/></svg>
<div class="t" style="left:894.30px;top:114.77px;width:50.80000000000001px;height:10.26px;font-size:10.26px;line-height:10.26px;color:#bbbbbb;text-align:center;transform:rotate(90deg);transform-origin:50% 50%;">Gradle</div>
<svg style="position:absolute;left:915px;top:158px;" width="12" height="14" viewBox="0 0 12 14"><path d="M9.5 2.5 V0.7 H0.7 V10.3 H4" stroke="#afb1b3" stroke-width="1.3" fill="none"/><rect x="4.5" y="4" width="6.8" height="9.3" rx="1" fill="#afb1b3"/><rect x="5.8" y="5.2" width="4.2" height="5.3" fill="#3c3f41"/><rect x="7.2" y="11.3" width="1.4" height="1" fill="#3c3f41"/></svg>
<div class="t" style="left:867.70px;top:212.62px;width:104.80000000000001px;height:11.16px;font-size:11.16px;line-height:11.16px;color:#bbbbbb;text-align:center;transform:rotate(90deg);transform-origin:50% 50%;">Layout Validation</div>
<svg style="position:absolute;left:915px;top:506px;" width="13" height="12" viewBox="0 0 13 12"><path d="M6.5 0.7 H0.7 V10.3 H5" stroke="#afb1b3" stroke-width="1.3" fill="none"/><rect x="5.6" y="3.6" width="5.8" height="4.6" stroke="#afb1b3" stroke-width="1.1" fill="none"/><path d="M8.5 4.2 V7.6" stroke="#afb1b3" stroke-width="1"/><path d="M5.5 10 H11.5" stroke="#afb1b3" stroke-width="1.1"/></svg>
<div class="t" style="left:888.50px;top:539.90px;width:63.19999999999993px;height:10.80px;font-size:10.80px;line-height:10.80px;color:#bbbbbb;text-align:center;transform:rotate(90deg);transform-origin:50% 50%;">Emulator</div>
<div style="position:absolute;left:4px;top:577px;width:927px;height:1px;background:#323232;"></div>
<div style="position:absolute;left:4px;top:578px;width:927px;height:20px;background:#3c3f41;"></div>
<svg style="position:absolute;left:36px;top:584px;" width="11" height="10" viewBox="0 0 11 10"><rect x="0" y="0.5" width="2" height="2" fill="#afb1b3"/><rect x="0" y="4" width="2" height="2" fill="#afb1b3"/><rect x="0" y="7.5" width="2" height="2" fill="#afb1b3"/><rect x="3.5" y="0.5" width="7" height="2" fill="#afb1b3"/><rect x="3.5" y="4" width="7" height="2" fill="#afb1b3"/><rect x="3.5" y="7.5" width="7" height="2" fill="#afb1b3"/></svg>
<div class="t" style="left:51.3px;top:582.69px;font-size:11px;line-height:11px;color:#bbbbbb;">TODO</div>
<svg style="position:absolute;left:104px;top:583px;" width="12" height="12" viewBox="0 0 12 12"><circle cx="6" cy="6" r="5.8" fill="#afb1b3"/><rect x="5" y="2.5" width="2" height="4.5" fill="#3c3f41"/><rect x="5" y="8" width="2" height="1.8" fill="#3c3f41"/></svg>
<div class="t" style="left:120px;top:582.69px;font-size:11px;line-height:11px;color:#bbbbbb;">Problems</div>
<svg style="position:absolute;left:188px;top:583px;" width="11" height="11" viewBox="0 0 11 11"><rect x="0" y="0" width="11" height="11" fill="#afb1b3"/><path d="M2 2.5 L5 5 L2 7.5" stroke="#3c3f41" stroke-width="1.2" fill="none"/><path d="M5.5 9 H9.5" stroke="#3c3f41" stroke-width="1.2"/></svg>
<div class="t" style="left:204px;top:582.35px;font-size:11.4px;line-height:11.4px;color:#bbbbbb;">Terminal</div>
<svg style="position:absolute;left:267px;top:582px;" width="14" height="14" viewBox="0 0 14 14"><path d="M1 3.5 L5 0.8 L7.5 2 L6 3.5 L13 11.5 L11.5 13 L4.5 5 L3 6.5 Z" fill="#afb1b3"/></svg>
<div class="t" style="left:284.2px;top:582.69px;font-size:11px;line-height:11px;color:#bbbbbb;">Build</div>
<svg style="position:absolute;left:328px;top:584px;" width="12" height="10" viewBox="0 0 12 10"><path d="M0 1 H11 M0 4.5 H8 M0 8 H11" stroke="#afb1b3" stroke-width="1.6"/></svg>
<div class="t" style="left:345px;top:582.69px;font-size:11px;line-height:11px;color:#bbbbbb;">Logcat</div>
<svg style="position:absolute;left:398px;top:584px;" width="14" height="10" viewBox="0 0 14 10"><path d="M1.2 9.5 A5.8 5.8 0 0 1 12.8 9.5" stroke="#afb1b3" stroke-width="1.8" fill="none"/><path d="M7 9 L9.8 4.5" stroke="#afb1b3" stroke-width="1.6"/></svg>
<div class="t" style="left:415px;top:582.35px;font-size:11.4px;line-height:11.4px;color:#bbbbbb;">Profiler</div>
<svg style="position:absolute;left:475px;top:583px;" width="12" height="13" viewBox="0 0 12 13"><rect x="3" y="0" width="6" height="4" rx="1" fill="#afb1b3"/><rect x="1.5" y="4" width="9" height="6" fill="#afb1b3"/><rect x="3" y="10" width="6" height="3" fill="#afb1b3"/><path d="M0 6 H12 M0 8.5 H12" stroke="#afb1b3" stroke-width="1"/></svg>
<div class="t" style="left:491px;top:582.69px;font-size:11px;line-height:11px;color:#bbbbbb;">App Inspection</div>
<svg style="position:absolute;left:585px;top:583px;" width="13" height="13" viewBox="0 0 13 13"><path d="M1 0.5 L10 6 L1 11.5 Z" fill="#afb1b3"/><circle cx="9.5" cy="10.5" r="2" fill="#1bd126"/></svg>
<div class="t" style="left:599.6px;top:582.69px;font-size:11px;line-height:11px;color:#bbbbbb;">Run</div>
<svg style="position:absolute;left:712px;top:582px;" width="13" height="13" viewBox="0 0 13 13"><path d="M6.5 12 A5.5 5.5 0 1 1 12 6.5 V12 Z" stroke="#afb1b3" stroke-width="1.3" fill="none"/></svg>
<div class="t" style="left:729.5px;top:582.69px;font-size:11px;line-height:11px;color:#bbbbbb;">Event Log</div>
<svg style="position:absolute;left:800px;top:582px;" width="15" height="14" viewBox="0 0 15 14"><rect x="0.5" y="0.5" width="10" height="9" stroke="#afb1b3" stroke-width="1" fill="none"/><rect x="3" y="3" width="10" height="8" stroke="#afb1b3" stroke-width="1" fill="#3c3f41"/><circle cx="8.5" cy="7.5" r="2.3" stroke="#afb1b3" stroke-width="1.1" fill="#3c3f41"/><path d="M10.2 9.2 L13 12" stroke="#afb1b3" stroke-width="1.3"/></svg>
<div class="t" style="left:817px;top:582.69px;font-size:11px;line-height:11px;color:#bbbbbb;">Layout Inspector</div>
<div style="position:absolute;left:4px;top:598px;width:927px;height:1px;background:#484848;"></div>
<div style="position:absolute;left:4px;top:599px;width:927px;height:20px;background:#3c3f41;"></div>
<svg style="position:absolute;left:10px;top:603px;" width="13" height="13" viewBox="0 0 13 13"><rect x="3" y="0.5" width="9.5" height="9.5" stroke="#afb1b3" stroke-width="1" fill="none"/><path d="M0.5 3 V12.5 H10" stroke="#afb1b3" stroke-width="1" fill="none"/></svg>
<div class="t" style="left:31.5px;top:603.55px;font-size:12.7px;line-height:12.7px;color:#bbbbbb;">Launch succeeded (11 minutes ago)</div>
<div class="t" style="left:696.8px;top:603.55px;font-size:12.7px;line-height:12.7px;color:#bbbbbb;">1:1</div>
<div class="t" style="left:725.5px;top:603.72px;font-size:12.5px;line-height:12.5px;color:#bbbbbb;">LF</div>
<div class="t" style="left:751.4px;top:604.23px;font-size:11.9px;line-height:11.9px;color:#787878;">UTF-8</div>
<div class="t" style="left:796.9px;top:603.80px;font-size:12.4px;line-height:12.4px;color:#bbbbbb;">4 spaces</div>
<svg style="position:absolute;left:857px;top:603px;" width="13" height="13" viewBox="0 0 13 13"><path d="M2.5 6 V3.5 A2.5 2.5 0 0 1 7.5 3.5" stroke="#afb1b3" stroke-width="1.4" fill="none"/><rect x="4" y="6" width="8" height="6" fill="#afb1b3"/></svg>
<svg style="position:absolute;left:882px;top:602px;" width="14" height="14" viewBox="0 0 14 14"><circle cx="7" cy="7" r="6.8" fill="#afb1b3"/><circle cx="4.8" cy="5" r="1" fill="#3c3f41"/><circle cx="9.2" cy="5" r="1" fill="#3c3f41"/><path d="M3.8 8.5 C5 11 9 11 10.2 8.5" stroke="#3c3f41" stroke-width="1.2" fill="none"/></svg>
<svg style="position:absolute;left:906px;top:602px;" width="14" height="14" viewBox="0 0 14 14"><circle cx="7" cy="7" r="6.8" fill="#afb1b3"/><circle cx="4.8" cy="5" r="1" fill="#3c3f41"/><circle cx="9.2" cy="5" r="1" fill="#3c3f41"/><path d="M3.8 10.5 C5 8 9 8 10.2 10.5" stroke="#3c3f41" stroke-width="1.2" fill="none"/></svg>
<svg style="position:absolute;left:533px;top:55.8px;" width="15" height="16" viewBox="0 0 15 16"><path d="M5.8 14.2 A5.3 5.3 0 0 1 7.5 3.9" stroke="#499c54" stroke-width="2" fill="none"/><path d="M7 0.3 L13.5 4 L7 7.7 Z" fill="#499c54"/><rect x="7" y="9.3" width="5.6" height="5.6" fill="#afb1b3"/></svg>
<svg style="position:absolute;left:557px;top:55.8px;" width="15" height="16" viewBox="0 0 15 16"><path d="M5.8 14.2 A5.3 5.3 0 0 1 7.5 3.9" stroke="#499c54" stroke-width="2" fill="none"/><path d="M7 0.3 L13.5 4 L7 7.7 Z" fill="#499c54"/><path d="M7 15 L9.5 8.5 L12 15 M7.8 12.8 H11.2" stroke="#afb1b3" stroke-width="1.3" fill="none"/></svg>
<svg style="position:absolute;left:585px;top:57.5px;" width="15" height="14" viewBox="0 0 15 14"><path d="M0 1 H12 M0 4 H12 M0 7 H6 M0 10 H8" stroke="#afb1b3" stroke-width="1.5"/><path d="M9.5 7.5 C14 7 14.5 12 11 12.5" stroke="#499c54" stroke-width="1.3" fill="none"/><path d="M10 6 L8.3 7.6 L10 9.2" stroke="#499c54" stroke-width="1.2" fill="none"/></svg>
<svg style="position:absolute;left:610px;top:55px;" width="13" height="15" viewBox="0 0 13 15"><path d="M2.5 5 C2.5 2.5 10.5 2.5 10.5 5 V10 C10.5 14.5 2.5 14.5 2.5 10 Z" fill="#499c54"/><path d="M3.2 0.8 L5 3 M9.8 0.8 L8 3 M0 6.5 H2.5 M10.5 6.5 H13 M0 10 H2.5 M10.5 10 H13" stroke="#499c54" stroke-width="1.4"/><path d="M3.5 7.2 H9.5 M3.5 10 H9.5" stroke="#3c3f41" stroke-width="1"/></svg>
<svg style="position:absolute;left:636px;top:56px;" width="15" height="16" viewBox="0 0 15 16"><path d="M0 2 L5 0 L10 2 V9 C10 12 7 14 5 15 C3 14 0 12 0 9 Z" fill="#5f6265"/><path d="M7 6 L14 10.5 L7 15 Z" fill="#5f6265" stroke="#3c3f41" stroke-width="1"/></svg>
<svg style="position:absolute;left:661px;top:57px;" width="16" height="12" viewBox="0 0 16 12"><path d="M1.5 9.5 A6.5 6.5 0 0 1 11.25 3.87" stroke="#3592c4" stroke-width="2.2" fill="none"/><path d="M13 5.3 A6.5 6.5 0 0 1 14.5 9.5" stroke="#afb1b3" stroke-width="2.2" fill="none"/><path d="M6.3 10 L11.5 3.5 L8.8 10.8 Z" fill="#afb1b3"/></svg>
<svg style="position:absolute;left:688px;top:55px;" width="16" height="16" viewBox="0 0 16 16"><path d="M2.5 5 C2.5 2.5 10.5 2.5 10.5 5 V10 C10.5 14.5 2.5 14.5 2.5 10 Z" fill="#499c54"/><path d="M3.2 0.8 L5 3 M9.8 0.8 L8 3 M0 6.5 H2.5 M10.5 6.5 H13 M0 10 H2.5 M10.5 10 H13" stroke="#499c54" stroke-width="1.4"/><path d="M3.5 7.2 H9.5 M3.5 10 H9.5" stroke="#3c3f41" stroke-width="1"/><path d="M8 8 H15 V15 H8 Z" fill="#3c3f41"/><path d="M9.5 14.5 L14 10 M10.5 9.8 H14.2 V13.5" stroke="#afb1b3" stroke-width="1.6" fill="none"/></svg>
<div style="position:absolute;left:716px;top:58px;width:10px;height:10px;background:#c75450;"></div>
<div style="position:absolute;left:738px;top:55px;width:1px;height:17px;background:#515151;"></div>
<svg style="position:absolute;left:747px;top:57px;" width="16" height="14" viewBox="0 0 16 14"><path d="M0 0.5 H5 L6.5 2.5 H14 V11 H0 Z" fill="#afb1b3"/><rect x="6" y="5" width="9" height="9" fill="#3c3f41"/><rect x="10.5" y="5.8" width="3" height="3" fill="#3592c4"/><rect x="6.8" y="9.8" width="3" height="3" fill="#3592c4"/><rect x="10.5" y="9.8" width="3" height="3" fill="#3592c4"/></svg>
<div style="position:absolute;left:770px;top:55px;width:1px;height:17px;background:#515151;"></div>
<svg style="position:absolute;left:778px;top:57px;" width="14" height="13" viewBox="0 0 14 13"><rect x="0.7" y="0.7" width="12.6" height="11.6" stroke="#afb1b3" stroke-width="1.3" fill="none"/><path d="M0.7 2.6 H13.3" stroke="#afb1b3" stroke-width="1"/><path d="M3.5 5 L8 7.8 L3.5 10.6 Z" fill="#499c54"/></svg>
<svg style="position:absolute;left:801px;top:56px;transform:translateY(1px)" width="17" height="15" viewBox="0 0 17 15"><path d="M0.7 11.5 C0.2 7 2 2.5 6 2.3 C9 2.2 11 3 11.8 5.5 L11.8 11.5 H9.5 L9 10 C8.5 9.5 7.5 9.5 7 10 L6.7 11.5 H5 L4.6 10 C4 9.5 3 9.5 2.6 10 L2.3 11.5 Z" fill="#afb1b3"/><path d="M11 6 C13 5.5 14.2 3.8 14 2 C13.9 0.8 12.8 0.5 12 1.3" stroke="#afb1b3" stroke-width="1.6" fill="none"/><path d="M4 4.5 C5 5.8 6.8 5.8 8 4.5" stroke="#3c3f41" stroke-width="0.7" fill="none"/><rect x="7.5" y="7" width="10" height="9" fill="#3c3f41"/><path d="M15 8 L9.8 13.2 M9.3 9 V13.7 H14" stroke="#3592c4" stroke-width="1.8" fill="none"/></svg>
<svg style="position:absolute;left:830px;top:57px;" width="14" height="14" viewBox="0 0 14 14"><rect x="0.7" y="0.7" width="7.6" height="11.6" rx="1" stroke="#afb1b3" stroke-width="1.3" fill="none"/><rect x="4.5" y="7" width="10" height="7" fill="#3c3f41"/><path d="M5.5 13 A4.5 4.5 0 0 1 14 13 Z" fill="#3ddc84"/></svg>
<svg style="position:absolute;left:853px;top:55px;" width="16" height="16" viewBox="0 0 16 16"><path d="M5.5 0.5 L11 3 V9 L5.5 11.5 L0 9 V3 Z" fill="#afb1b3"/><path d="M0 3 L5.5 5.5 L11 3 M5.5 5.5 V11.5" stroke="#3c3f41" stroke-width="0.9" fill="none"/><rect x="8" y="7" width="8" height="9" fill="#3c3f41"/><path d="M12 7 V14 M9 11.5 L12 14.5 L15 11.5" stroke="#3592c4" stroke-width="1.6" fill="none"/></svg>
<div style="position:absolute;left:877px;top:55px;width:1px;height:17px;background:#515151;"></div>
<svg style="position:absolute;left:885px;top:56px;" width="15" height="15" viewBox="0 0 15 15"><circle cx="6" cy="6" r="4.8" stroke="#afb1b3" stroke-width="1.7" fill="none"/><path d="M9.5 9.5 L14 14" stroke="#afb1b3" stroke-width="2.2"/></svg>
<svg style="position:absolute;left:908px;top:55px;" width="16" height="16" viewBox="0 0 16 16"><rect x="0" y="0" width="16" height="16" fill="#d8d8d8"/><circle cx="8" cy="5.8" r="3.3" fill="#ffffff"/><path d="M2 16 C2 10.5 14 10.5 14 16 Z" fill="#ffffff"/></svg>
<svg style="position:absolute;left:0px;top:0px;pointer-events:none;" width="935" height="623" viewBox="0 0 935 623"><path d="M192 357 L303 110" stroke="#ff0000" stroke-width="2.35" fill="none"/><path d="M311 91 L296 108.5 L309 114 Z" fill="#ff0000"/></svg>
<div style="position:absolute;left:733px;top:102px;width:180px;height:37px;background:transparent;border:2px solid #ff0000;border-radius:1px;box-sizing:border-box;"></div>
</body></html>
